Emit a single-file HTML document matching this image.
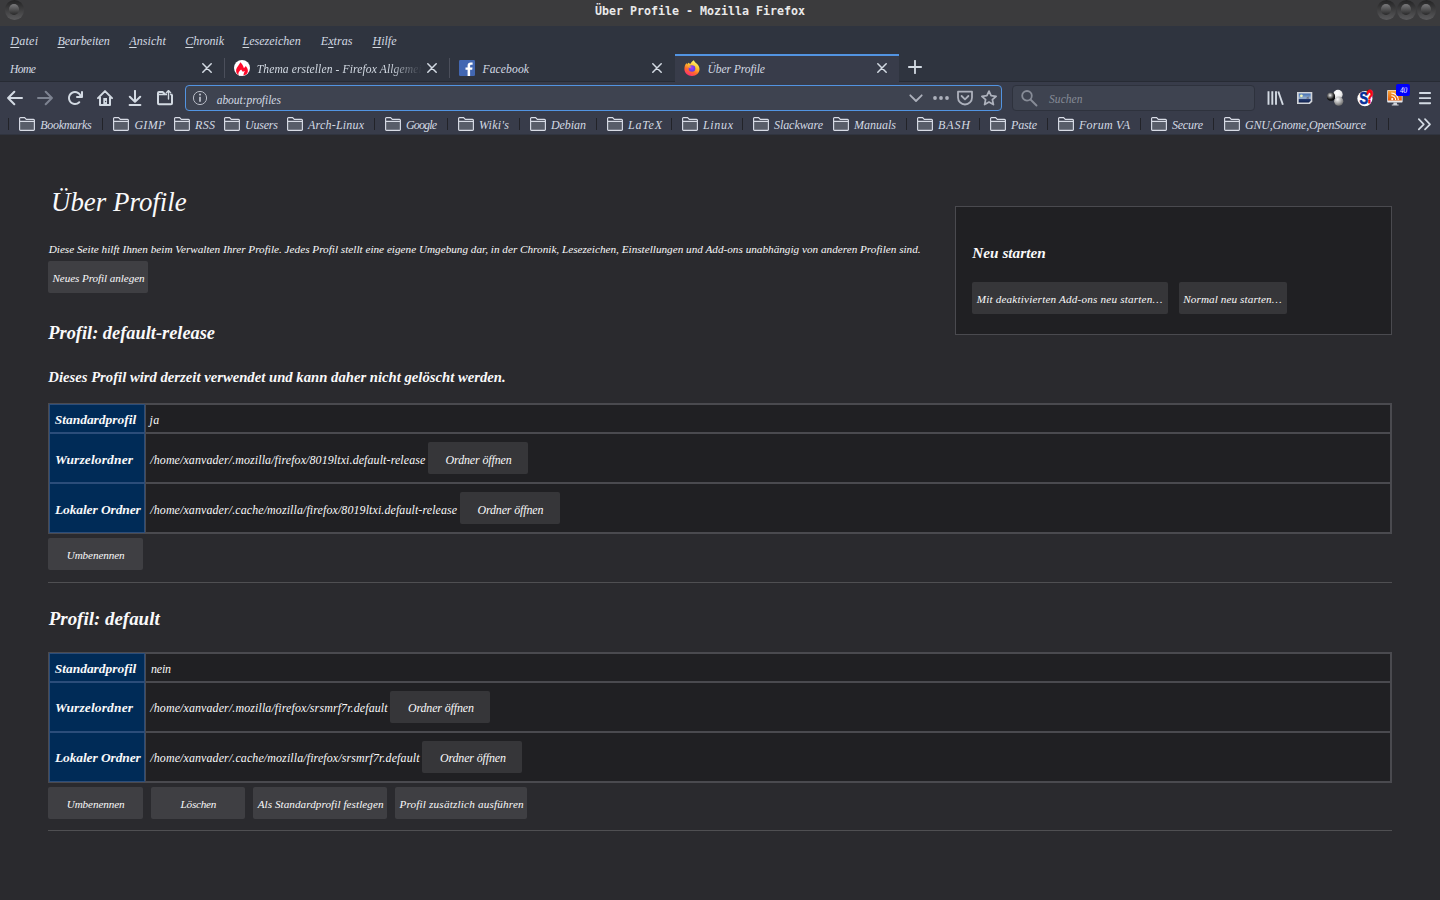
<!DOCTYPE html>
<html lang="de">
<head>
<meta charset="utf-8">
<title>Über Profile - Mozilla Firefox</title>
<style>
*{box-sizing:border-box;margin:0;padding:0}
html,body{width:1440px;height:900px;overflow:hidden;background:#2a2a2e}
body{position:relative;font-family:"Liberation Serif",serif;font-style:italic;color:#f9f9fa}
.a,.t,svg.i{position:absolute}
.t{white-space:nowrap;line-height:1;display:block}
.t u{text-decoration:underline;text-underline-offset:2px;text-decoration-thickness:1px}
#titlebar{left:0;top:0;width:1440px;height:26px;background:#3b3b3d}
#title{left:0;top:0;width:1400px;height:22px;line-height:22px;text-align:center;font-family:"DejaVu Sans Mono","Liberation Mono",monospace;font-style:normal;font-weight:bold;font-size:11.63px;color:#e9e9e9;white-space:nowrap}
.wb{top:0;width:19px;height:19.500px;border-radius:50%;background:linear-gradient(#232324,#5a5a5c)}
.wb::after{content:"";position:absolute;left:4.2px;top:4px;width:10.6px;height:10.8px;border-radius:50%;background:linear-gradient(#7a7a7c,#29292a)}
#chrome1{left:0;top:26px;width:1440px;height:56px;background:#2f343f}
#chrome2{left:0;top:82px;width:1440px;height:53px;background:#383c4a;border-bottom:1px solid #30343f}
#tabline{left:0;top:81px;width:1440px;height:1px;background:#272b34}
#acttab{left:675px;top:54px;width:224px;height:28px;background:#383c4a;border-top:2px solid #5294e2}
.sep{top:58px;width:1px;height:20px;background:#4b4f5b}
#urlbar{left:185px;top:85px;width:817px;height:26px;border:1px solid #5294e2;border-radius:4px;background:#3e4350}
#search{left:1012px;top:85px;width:243px;height:26px;border:1px solid #2e323d;border-radius:4px;background:#3e4350}
.bsep{top:118px;width:1px;height:12px;background:#222329}
.btn{background:#3f3f43;border-radius:2px;height:32px}
.btn.d{background:#363639}
.box{background:#202023;border:1px solid #4a4a4f}
.hr{left:48px;width:1344px;height:1px;background:#4f4f52}
.tbl{left:48px;width:1344px;height:131px;background:#202023;border:1px solid #4a4a4f}
.tbl i{position:absolute;display:block;left:96px;right:0;border:1px solid #4a4a4f}
.tbl b{position:absolute;display:block;background:#002b57;left:0;width:96px;border:1px solid #2b4d7a}
</style>
</head>
<body>
<div id="titlebar" class="a"></div>
<div id="title" class="a">Über Profile - Mozilla Firefox</div>
<div class="a wb" style="left:4.5px"></div>
<div class="a wb" style="left:1376.5px"></div>
<div class="a wb" style="left:1396.5px"></div>
<div class="a wb" style="left:1416.5px"></div>
<div id="chrome1" class="a"></div>
<div id="chrome2" class="a"></div>
<div id="tabline" class="a"></div>
<div id="acttab" class="a"></div>
<div class="a sep" style="left:224px"></div>
<div class="a sep" style="left:449px"></div>
<div id="urlbar" class="a"></div>
<div id="search" class="a"></div>
<!-- tab close buttons -->
<svg class="i" style="left:202px;top:63px" width="10" height="10" viewBox="0 0 10 10"><path d="M.8.8l8.4 8.4M9.200.8L.8 9.200" stroke="#d3dae3" stroke-width="1.500" stroke-linecap="round"/></svg>
<svg class="i" style="left:427px;top:63px" width="10" height="10" viewBox="0 0 10 10"><path d="M.8.8l8.4 8.4M9.200.8L.8 9.200" stroke="#d3dae3" stroke-width="1.500" stroke-linecap="round"/></svg>
<svg class="i" style="left:652px;top:63px" width="10" height="10" viewBox="0 0 10 10"><path d="M.8.8l8.4 8.4M9.200.8L.8 9.200" stroke="#d3dae3" stroke-width="1.500" stroke-linecap="round"/></svg>
<svg class="i" style="left:877px;top:63px" width="10" height="10" viewBox="0 0 10 10"><path d="M.8.8l8.4 8.4M9.200.8L.8 9.200" stroke="#d3dae3" stroke-width="1.500" stroke-linecap="round"/></svg>
<!-- new tab plus -->
<svg class="i" style="left:908px;top:60px" width="14" height="14" viewBox="0 0 14 14"><path d="M7 .8v12.400M.8 7h12.400" stroke="#d3dae3" stroke-width="1.800" stroke-linecap="round"/></svg>
<!-- favicon: flame -->
<svg class="i" style="left:234px;top:60px" width="16" height="16" viewBox="0 0 16 16"><circle cx="8" cy="8" r="8" fill="#fff"/><path d="M6.200 2.200C7.400 3 8.300 4.100 8.700 5.300c.5.900.8 1.800 1.100 2.700.9-.4 1.500-1.100 1.900-2.100 1 1 2.100 2.800 2.200 4.800.1 2.300-1.500 4.100-4.100 4.500H5.300C3.300 14.600 2.100 12.700 2.100 10.400c0-1.400.6-2.400 1.300-3.500C4.300 5.500 5.500 4.200 6.200 2.200z" fill="#ff0a2a"/><path d="M7.100 9.400C6 10.300 4.700 11.800 4.400 13.200c-.1 1 .3 1.900 1 2.600h3.700c.5-.9.500-1.900.8-2.900l1-2c-.9.400-1.800.6-2.500.5-.4-.8-.8-1.400-1.300-2z" fill="#fff"/></svg>
<!-- favicon: facebook -->
<svg class="i" style="left:459px;top:60px" width="16" height="16" viewBox="0 0 16 16"><rect width="16" height="16" rx="1.200" fill="#4267b2"/><path d="M11.100 16V9.800h2.100l.3-2.400h-2.400V5.900c0-.7.2-1.200 1.200-1.200h1.300V2.500c-.2 0-1-.1-1.900-.1-1.900 0-3.100 1.100-3.100 3.200v1.800H6.500v2.400h2.100V16z" fill="#fff"/></svg>
<!-- favicon: firefox -->
<svg class="i" style="left:684px;top:60px" width="16" height="16" viewBox="0 0 16 16"><defs><linearGradient id="fx1" x1="0.750" y1="0.100" x2="0.300" y2="1"><stop offset="0" stop-color="#fff36b"/><stop offset=".35" stop-color="#ffbd2f"/><stop offset=".65" stop-color="#ff6a2a"/><stop offset="1" stop-color="#ff2a78"/></linearGradient><radialGradient id="fx2" cx=".45" cy=".4" r=".6"><stop offset="0" stop-color="#a33dff"/><stop offset="1" stop-color="#5a3de0"/></radialGradient></defs><path d="M9.900.2c.2 1 .8 1.800 1.700 2.500 2.300 1.700 3.900 3.600 3.900 6.300 0 4-3.300 7-7.500 7S.4 13 .4 9c0-2.400.8-4.400 2.100-5.900.1.600.3 1 .7 1.300.3-.9.900-1.400 1.700-1.600.2.600.7 1 1.400 1.300C7 2.600 8.100 1.100 9.900.2z" fill="url(#fx1)"/><circle cx="8" cy="8.500" r="3.300" fill="url(#fx2)"/><path d="M3.900 6.600c1.200-.7 2.700-.5 3.900.1-.9.200-1.500.8-1.600 1.500-.9-.5-1.700-1-2.300-1.600z" fill="#ffb02e"/></svg>
<!-- nav icons -->
<svg class="i" style="left:7px;top:90px" width="16" height="16" viewBox="0 0 16 16"><path d="M15 8H1.800M7.300 1.800L1.100 8l6.200 6.200" fill="none" stroke="#d3dae3" stroke-width="2" stroke-linecap="round" stroke-linejoin="round"/></svg>
<svg class="i" style="left:37px;top:90px" width="16" height="16" viewBox="0 0 16 16"><path d="M1 8h13.200M8.700 1.800L14.900 8l-6.200 6.200" fill="none" stroke="#7d8391" stroke-width="2" stroke-linecap="round" stroke-linejoin="round"/></svg>
<svg class="i" style="left:67px;top:90px" width="16" height="16" viewBox="0 0 16 16"><path d="M15 1a1 1 0 0 0-1 1v2.418A6.995 6.995 0 1 0 8 15a6.954 6.954 0 0 0 4.950-2.050 1 1 0 0 0-1.414-1.414A5.019 5.019 0 1 1 12.549 6H10a1 1 0 0 0 0 2h5a1 1 0 0 0 1-1V2a1 1 0 0 0-1-1z" fill="#d3dae3"/></svg>
<svg class="i" style="left:97px;top:90px" width="16" height="16" viewBox="0 0 16 16"><path d="M1 8.100L8 1.100l7 7M3 7.200V15h10V7.200" fill="none" stroke="#d3dae3" stroke-width="2" stroke-linecap="round" stroke-linejoin="round"/><rect x="6.300" y="8" width="3.700" height="6.500" fill="#d3dae3"/><circle cx="8.600" cy="11.500" r=".65" fill="#3a3e4c"/></svg>
<svg class="i" style="left:127px;top:90px" width="16" height="16" viewBox="0 0 16 16"><path d="M8 .9v10.800M2.800 6.700L8 11.900l5.200-5.200M2.600 15h10.800" fill="none" stroke="#d3dae3" stroke-width="2" stroke-linecap="round" stroke-linejoin="round"/></svg>
<svg class="i" style="left:157px;top:90px" width="16" height="16" viewBox="0 0 16 16"><path d="M15 4.700V13.200a1 1 0 0 1-1 1H2a1 1 0 0 1-1-1V3a1 1 0 0 1 1-1h3.600L8.200 4.500" fill="none" stroke="#d3dae3" stroke-width="2" stroke-linejoin="round"/><path d="M1.500 4.600H10M13.100 4.450H15.500" fill="none" stroke="#d3dae3" stroke-width="1.500"/><path d="M11.500 9.100V.8M9.400 2.700L11.500.6l2.100 2.100" fill="none" stroke="#d3dae3" stroke-width="1.400" stroke-linecap="round" stroke-linejoin="round"/></svg>
<!-- urlbar icons -->
<svg class="i" style="left:192px;top:90px" width="16" height="16" viewBox="0 0 16 16"><circle cx="8" cy="8" r="6.600" fill="none" stroke="#b9bdc7" stroke-width="1"/><rect x="7.100" y="6.700" width="1.800" height="5" rx=".3" fill="#b9bdc7"/><circle cx="8" cy="4.600" r="1.100" fill="#b9bdc7"/></svg>
<svg class="i" style="left:908px;top:90px" width="16" height="16" viewBox="0 0 16 16"><path d="M2.300 5.300L8 11l5.700-5.700" fill="none" stroke="#adb1bc" stroke-width="1.800" stroke-linecap="round" stroke-linejoin="round"/></svg>
<svg class="i" style="left:933px;top:90px" width="16" height="16" viewBox="0 0 16 16"><circle cx="2" cy="8" r="1.900" fill="#adb1bc"/><circle cx="8" cy="8" r="1.900" fill="#adb1bc"/><circle cx="14" cy="8" r="1.900" fill="#adb1bc"/></svg>
<svg class="i" style="left:957px;top:90px" width="16" height="16" viewBox="0 0 16 16"><path d="M1 1.700h14v5.800a7 7 0 0 1-14 0z" fill="none" stroke="#adb1bc" stroke-width="1.800" stroke-linejoin="round"/><path d="M4.600 6L8 9.300 11.400 6" fill="none" stroke="#adb1bc" stroke-width="1.800" stroke-linecap="round" stroke-linejoin="round"/></svg>
<svg class="i" style="left:981px;top:90px" width="16" height="16" viewBox="0 0 16 16"><path d="M8 1.100l2.100 4.600 5 .6-3.700 3.400 1 4.900L8 12.100l-4.400 2.500 1-4.900L.9 6.300l5-.6z" fill="none" stroke="#adb1bc" stroke-width="1.750" stroke-linejoin="round"/></svg>
<svg class="i" style="left:1020.200px;top:89.300px" width="18" height="18" viewBox="0 0 18 18"><circle cx="7" cy="6.800" r="4.800" fill="none" stroke="#878c97" stroke-width="1.800"/><path d="M10.500 10.500l6 6" stroke="#878c97" stroke-width="1.900" stroke-linecap="round"/></svg>
<!-- toolbar right icons -->
<svg class="i" style="left:1267px;top:90px" width="17" height="16" viewBox="0 0 17 16"><path d="M1.500 1.200v13.600M5.300 1.200v13.600M9 1.200v13.600" stroke="#d3dae3" stroke-width="1.900"/><path d="M11.300 1.500l4.600 13.200" stroke="#d3dae3" stroke-width="1.900"/></svg>
<svg class="i" style="left:1297px;top:91.700px" width="16" height="12.500" viewBox="0 0 16 12.500"><defs><linearGradient id="im1" x1="0" y1="0" x2="0" y2="1"><stop offset="0" stop-color="#3f6cb0"/><stop offset=".55" stop-color="#9db6d2"/><stop offset=".6" stop-color="#27407a"/><stop offset="1" stop-color="#0f1f48"/></linearGradient></defs><path d="M0 0h15.300v9.700L12.700 12.100H0z" fill="#d0d3d8"/><path d="M1.700 1.500h12v7.300l-1.800 1.700H1.700z" fill="url(#im1)"/><circle cx="4.400" cy="3.800" r="1.400" fill="#f1f7b8"/><path d="M9.300 6.700l.7-2 .8.500.5-1.300.8 2.800z" fill="#6f7686"/></svg>
<svg class="i" style="left:1326px;top:89px" width="18" height="18" viewBox="0 0 18 18"><defs><radialGradient id="b1" cx=".4" cy=".33" r=".7"><stop offset="0" stop-color="#f4f4f4"/><stop offset=".3" stop-color="#8c8c8c"/><stop offset=".7" stop-color="#1c1c1c"/><stop offset="1" stop-color="#000"/></radialGradient><radialGradient id="b2" cx=".4" cy=".35" r=".75"><stop offset="0" stop-color="#fff"/><stop offset=".6" stop-color="#ececec"/><stop offset="1" stop-color="#b8b8b8"/></radialGradient><radialGradient id="b3" cx=".38" cy=".3" r=".75"><stop offset="0" stop-color="#fafafa"/><stop offset=".45" stop-color="#b9b9b9"/><stop offset="1" stop-color="#626262"/></radialGradient></defs><circle cx="12" cy="5.500" r="4.700" fill="url(#b2)"/><circle cx="5" cy="7.700" r="4.100" fill="url(#b1)"/><circle cx="12.700" cy="12.200" r="4.600" fill="url(#b3)"/></svg>
<svg class="i" style="left:1356px;top:88px" width="20" height="20" viewBox="0 0 20 20"><circle cx="8.900" cy="10.600" r="7.550" fill="#fff"/><text x="3.600" y="15.700" font-family="Liberation Sans,sans-serif" font-style="normal" font-weight="bold" font-size="15.800" fill="#06309a" stroke="#06309a" stroke-width=".7" textLength="8.600" lengthAdjust="spacingAndGlyphs">S</text><text x="10.300" y="14.700" font-family="Liberation Sans,sans-serif" font-style="normal" font-weight="bold" font-size="17.600" fill="#fb0410" stroke="#fb0410" stroke-width=".9" textLength="6.800" lengthAdjust="spacingAndGlyphs">?</text></svg>
<svg class="i" style="left:1387px;top:84px" width="24" height="22" viewBox="0 0 24 22"><defs><linearGradient id="rs1" x1="0" y1="0" x2="0" y2="1"><stop offset="0" stop-color="#f9a63c"/><stop offset="1" stop-color="#e25a04"/></linearGradient></defs><rect x=".2" y="5.900" width="15.400" height="12.700" rx=".8" fill="#e6e8ec"/><rect x="1" y="6.600" width="13.800" height="9.900" fill="url(#rs1)"/><path d="M6.600 18.600h3.200l.4 2h1.400v.9H4.800v-.9h1.400z" fill="#cfd2d8"/><circle cx="5.200" cy="15.100" r="1.050" fill="#fff"/><path d="M4.300 11.700a4.300 4.300 0 0 1 4.300 4.300M4.300 9a7 7 0 0 1 7 7" fill="none" stroke="#fff" stroke-width="1.150"/><rect x="9" y="0" width="13.900" height="12" rx="2" fill="#0000fa"/><text x="12.900" y="9.200" font-family="Liberation Serif,serif" font-style="italic" font-size="9" fill="#f3e6ff" textLength="7.400" lengthAdjust="spacingAndGlyphs">40</text></svg>
<svg class="i" style="left:1419px;top:90px" width="12" height="16" viewBox="0 0 12 16"><path d="M.8 3h10.400M.8 8.100h10.400M.8 13.200h10.400" stroke="#d3dae3" stroke-width="1.900" stroke-linecap="round"/></svg>
<svg class="i" style="left:1416px;top:117px" width="16" height="14" viewBox="0 0 16 14"><path d="M2.800 2.200L7.800 7.300 2.800 12.400M9 2.200l5 5.100-5 5.100" fill="none" stroke="#d3dae3" stroke-width="1.700" stroke-linecap="round" stroke-linejoin="round"/></svg>
<svg class="i" style="left:19px;top:117px" width="16" height="14" viewBox="0 0 16 14"><path d="M.6 4.300h14.800v8.200a.9.900 0 0 1-.9.900h-13a.9.900 0 0 1-.9-.9z" fill="#585d69"/><path d="M.6 1.500a.9.900 0 0 1 .9-.9h4.100l1.700 1.800h7.200a.9.900 0 0 1 .9.900v9.200a.9.900 0 0 1-.9.900h-13a.9.900 0 0 1-.9-.9zM.6 4.300h14.800" fill="none" stroke="#d8dce6" stroke-width="1.150"/></svg>
<svg class="i" style="left:113px;top:117px" width="16" height="14" viewBox="0 0 16 14"><path d="M.6 4.300h14.800v8.200a.9.900 0 0 1-.9.900h-13a.9.900 0 0 1-.9-.9z" fill="#585d69"/><path d="M.6 1.500a.9.900 0 0 1 .9-.9h4.100l1.700 1.800h7.200a.9.900 0 0 1 .9.900v9.200a.9.900 0 0 1-.9.900h-13a.9.900 0 0 1-.9-.9zM.6 4.300h14.800" fill="none" stroke="#d8dce6" stroke-width="1.150"/></svg>
<svg class="i" style="left:174px;top:117px" width="16" height="14" viewBox="0 0 16 14"><path d="M.6 4.300h14.800v8.200a.9.900 0 0 1-.9.900h-13a.9.900 0 0 1-.9-.9z" fill="#585d69"/><path d="M.6 1.500a.9.900 0 0 1 .9-.9h4.100l1.700 1.800h7.200a.9.900 0 0 1 .9.900v9.200a.9.900 0 0 1-.9.900h-13a.9.900 0 0 1-.9-.9zM.6 4.300h14.800" fill="none" stroke="#d8dce6" stroke-width="1.150"/></svg>
<svg class="i" style="left:224px;top:117px" width="16" height="14" viewBox="0 0 16 14"><path d="M.6 4.300h14.800v8.200a.9.900 0 0 1-.9.900h-13a.9.900 0 0 1-.9-.9z" fill="#585d69"/><path d="M.6 1.500a.9.900 0 0 1 .9-.9h4.100l1.700 1.800h7.200a.9.900 0 0 1 .9.900v9.200a.9.900 0 0 1-.9.900h-13a.9.900 0 0 1-.9-.9zM.6 4.300h14.800" fill="none" stroke="#d8dce6" stroke-width="1.150"/></svg>
<svg class="i" style="left:287px;top:117px" width="16" height="14" viewBox="0 0 16 14"><path d="M.6 4.300h14.800v8.200a.9.900 0 0 1-.9.900h-13a.9.900 0 0 1-.9-.9z" fill="#585d69"/><path d="M.6 1.500a.9.900 0 0 1 .9-.9h4.100l1.700 1.800h7.200a.9.900 0 0 1 .9.900v9.200a.9.900 0 0 1-.9.900h-13a.9.900 0 0 1-.9-.9zM.6 4.300h14.800" fill="none" stroke="#d8dce6" stroke-width="1.150"/></svg>
<svg class="i" style="left:385px;top:117px" width="16" height="14" viewBox="0 0 16 14"><path d="M.6 4.300h14.800v8.200a.9.900 0 0 1-.9.900h-13a.9.900 0 0 1-.9-.9z" fill="#585d69"/><path d="M.6 1.500a.9.900 0 0 1 .9-.9h4.100l1.700 1.800h7.200a.9.900 0 0 1 .9.900v9.200a.9.900 0 0 1-.9.900h-13a.9.900 0 0 1-.9-.9zM.6 4.300h14.800" fill="none" stroke="#d8dce6" stroke-width="1.150"/></svg>
<svg class="i" style="left:458px;top:117px" width="16" height="14" viewBox="0 0 16 14"><path d="M.6 4.300h14.800v8.200a.9.900 0 0 1-.9.900h-13a.9.900 0 0 1-.9-.9z" fill="#585d69"/><path d="M.6 1.500a.9.900 0 0 1 .9-.9h4.100l1.700 1.800h7.200a.9.900 0 0 1 .9.900v9.200a.9.900 0 0 1-.9.900h-13a.9.900 0 0 1-.9-.9zM.6 4.300h14.800" fill="none" stroke="#d8dce6" stroke-width="1.150"/></svg>
<svg class="i" style="left:530px;top:117px" width="16" height="14" viewBox="0 0 16 14"><path d="M.6 4.300h14.800v8.200a.9.900 0 0 1-.9.900h-13a.9.900 0 0 1-.9-.9z" fill="#585d69"/><path d="M.6 1.500a.9.900 0 0 1 .9-.9h4.100l1.700 1.800h7.200a.9.900 0 0 1 .9.900v9.200a.9.900 0 0 1-.9.900h-13a.9.900 0 0 1-.9-.9zM.6 4.300h14.800" fill="none" stroke="#d8dce6" stroke-width="1.150"/></svg>
<svg class="i" style="left:607px;top:117px" width="16" height="14" viewBox="0 0 16 14"><path d="M.6 4.300h14.800v8.200a.9.900 0 0 1-.9.900h-13a.9.900 0 0 1-.9-.9z" fill="#585d69"/><path d="M.6 1.500a.9.900 0 0 1 .9-.9h4.100l1.700 1.800h7.200a.9.900 0 0 1 .9.900v9.200a.9.900 0 0 1-.9.900h-13a.9.900 0 0 1-.9-.9zM.6 4.300h14.800" fill="none" stroke="#d8dce6" stroke-width="1.150"/></svg>
<svg class="i" style="left:682px;top:117px" width="16" height="14" viewBox="0 0 16 14"><path d="M.6 4.300h14.800v8.200a.9.900 0 0 1-.9.900h-13a.9.900 0 0 1-.9-.9z" fill="#585d69"/><path d="M.6 1.500a.9.900 0 0 1 .9-.9h4.100l1.700 1.800h7.200a.9.900 0 0 1 .9.900v9.200a.9.900 0 0 1-.9.900h-13a.9.900 0 0 1-.9-.9zM.6 4.300h14.800" fill="none" stroke="#d8dce6" stroke-width="1.150"/></svg>
<svg class="i" style="left:753px;top:117px" width="16" height="14" viewBox="0 0 16 14"><path d="M.6 4.300h14.800v8.200a.9.900 0 0 1-.9.900h-13a.9.900 0 0 1-.9-.9z" fill="#585d69"/><path d="M.6 1.500a.9.900 0 0 1 .9-.9h4.100l1.700 1.800h7.200a.9.900 0 0 1 .9.900v9.200a.9.900 0 0 1-.9.900h-13a.9.900 0 0 1-.9-.9zM.6 4.300h14.800" fill="none" stroke="#d8dce6" stroke-width="1.150"/></svg>
<svg class="i" style="left:833px;top:117px" width="16" height="14" viewBox="0 0 16 14"><path d="M.6 4.300h14.800v8.200a.9.900 0 0 1-.9.900h-13a.9.900 0 0 1-.9-.9z" fill="#585d69"/><path d="M.6 1.500a.9.900 0 0 1 .9-.9h4.100l1.700 1.800h7.200a.9.900 0 0 1 .9.900v9.200a.9.900 0 0 1-.9.900h-13a.9.900 0 0 1-.9-.9zM.6 4.300h14.800" fill="none" stroke="#d8dce6" stroke-width="1.150"/></svg>
<svg class="i" style="left:917px;top:117px" width="16" height="14" viewBox="0 0 16 14"><path d="M.6 4.300h14.800v8.200a.9.900 0 0 1-.9.900h-13a.9.900 0 0 1-.9-.9z" fill="#585d69"/><path d="M.6 1.500a.9.900 0 0 1 .9-.9h4.100l1.700 1.800h7.200a.9.900 0 0 1 .9.900v9.200a.9.900 0 0 1-.9.900h-13a.9.900 0 0 1-.9-.9zM.6 4.300h14.800" fill="none" stroke="#d8dce6" stroke-width="1.150"/></svg>
<svg class="i" style="left:990px;top:117px" width="16" height="14" viewBox="0 0 16 14"><path d="M.6 4.300h14.800v8.200a.9.900 0 0 1-.9.900h-13a.9.900 0 0 1-.9-.9z" fill="#585d69"/><path d="M.6 1.500a.9.900 0 0 1 .9-.9h4.100l1.700 1.800h7.200a.9.900 0 0 1 .9.900v9.200a.9.900 0 0 1-.9.900h-13a.9.900 0 0 1-.9-.9zM.6 4.300h14.800" fill="none" stroke="#d8dce6" stroke-width="1.150"/></svg>
<svg class="i" style="left:1058px;top:117px" width="16" height="14" viewBox="0 0 16 14"><path d="M.6 4.300h14.800v8.200a.9.900 0 0 1-.9.900h-13a.9.900 0 0 1-.9-.9z" fill="#585d69"/><path d="M.6 1.500a.9.900 0 0 1 .9-.9h4.100l1.700 1.800h7.200a.9.900 0 0 1 .9.900v9.200a.9.900 0 0 1-.9.900h-13a.9.900 0 0 1-.9-.9zM.6 4.300h14.800" fill="none" stroke="#d8dce6" stroke-width="1.150"/></svg>
<svg class="i" style="left:1151px;top:117px" width="16" height="14" viewBox="0 0 16 14"><path d="M.6 4.300h14.800v8.200a.9.900 0 0 1-.9.900h-13a.9.900 0 0 1-.9-.9z" fill="#585d69"/><path d="M.6 1.500a.9.900 0 0 1 .9-.9h4.100l1.700 1.800h7.200a.9.900 0 0 1 .9.900v9.200a.9.900 0 0 1-.9.900h-13a.9.900 0 0 1-.9-.9zM.6 4.300h14.800" fill="none" stroke="#d8dce6" stroke-width="1.150"/></svg>
<svg class="i" style="left:1224px;top:117px" width="16" height="14" viewBox="0 0 16 14"><path d="M.6 4.300h14.800v8.200a.9.900 0 0 1-.9.900h-13a.9.900 0 0 1-.9-.9z" fill="#585d69"/><path d="M.6 1.500a.9.900 0 0 1 .9-.9h4.100l1.700 1.800h7.200a.9.900 0 0 1 .9.900v9.200a.9.900 0 0 1-.9.900h-13a.9.900 0 0 1-.9-.9zM.6 4.300h14.800" fill="none" stroke="#d8dce6" stroke-width="1.150"/></svg>
<div class="a bsep" style="left:8px"></div>
<div class="a bsep" style="left:102px"></div>
<div class="a bsep" style="left:374px"></div>
<div class="a bsep" style="left:447px"></div>
<div class="a bsep" style="left:519px"></div>
<div class="a bsep" style="left:596px"></div>
<div class="a bsep" style="left:671px"></div>
<div class="a bsep" style="left:742px"></div>
<div class="a bsep" style="left:906px"></div>
<div class="a bsep" style="left:979px"></div>
<div class="a bsep" style="left:1047px"></div>
<div class="a bsep" style="left:1140px"></div>
<div class="a bsep" style="left:1213px"></div>
<div class="a bsep" style="left:1376px"></div>
<div class="a bsep" style="left:1388px"></div>

<div class="a btn" style="left:48px;top:261px;width:100px"></div>
<div class="a box" style="left:955px;top:206px;width:437px;height:129px"></div>
<div class="a btn d" style="left:972px;top:282px;width:196px"></div>
<div class="a btn d" style="left:1179px;top:282px;width:108px"></div>
<div class="a tbl" style="top:403px"><b style="top:0;height:29px"></b><b style="top:29px;height:50px"></b><b style="top:79px;height:50px"></b><i style="top:0;height:29px"></i><i style="top:29px;height:50px"></i><i style="top:79px;height:50px"></i></div>
<div class="a btn d" style="left:428px;top:442px;width:100px"></div>
<div class="a btn d" style="left:460px;top:492px;width:100px"></div>
<div class="a btn" style="left:48px;top:538px;width:95px"></div>
<div class="a hr" style="top:582px"></div>
<div class="a tbl" style="top:652px"><b style="top:0;height:29px"></b><b style="top:29px;height:50px"></b><b style="top:79px;height:50px"></b><i style="top:0;height:29px"></i><i style="top:29px;height:50px"></i><i style="top:79px;height:50px"></i></div>
<div class="a btn d" style="left:390px;top:691px;width:100px"></div>
<div class="a btn d" style="left:422px;top:741px;width:100px"></div>
<div class="a btn" style="left:48px;top:787px;width:95px"></div>
<div class="a btn" style="left:151px;top:787px;width:94px"></div>
<div class="a btn" style="left:253px;top:787px;width:134px"></div>
<div class="a btn" style="left:395px;top:787px;width:132px"></div>
<div class="a hr" style="top:830px"></div>
<!--CONTENT-->
<span class="t" style="left:10.3px;top:35.00px;font-size:12.05px;letter-spacing:0.23px;color:#d3dae3"><u>D</u>atei</span>
<span class="t" style="left:57.5px;top:35.00px;font-size:12.05px;letter-spacing:-0.07px;color:#d3dae3"><u>B</u>earbeiten</span>
<span class="t" style="left:129.2px;top:35.00px;font-size:12.05px;letter-spacing:0.08px;color:#d3dae3"><u>A</u>nsicht</span>
<span class="t" style="left:185.3px;top:35.00px;font-size:12.05px;letter-spacing:-0.06px;color:#d3dae3"><u>C</u>hronik</span>
<span class="t" style="left:242.5px;top:35.00px;font-size:12.05px;color:#d3dae3"><u>L</u>esezeichen</span>
<span class="t" style="left:320.7px;top:35.00px;font-size:12.05px;letter-spacing:0.07px;color:#d3dae3">E<u>x</u>tras</span>
<span class="t" style="left:372.5px;top:35.00px;font-size:12.05px;letter-spacing:-0.02px;color:#d3dae3"><u>H</u>ilfe</span>
<span class="t" style="left:10.0px;top:64.00px;font-size:11.60px;letter-spacing:-0.63px;color:#d3dae3">Home</span>
<span class="t" style="left:256.7px;top:64.00px;font-size:11.60px;letter-spacing:0.10px;color:#d3dae3;width:165.0px;padding-bottom:4px;overflow:hidden;-webkit-mask-image:linear-gradient(90deg,#000 80%,transparent);mask-image:linear-gradient(90deg,#000 80%,transparent)">Thema erstellen - Firefox Allgemei</span>
<span class="t" style="left:482.5px;top:64.00px;font-size:11.60px;letter-spacing:0.11px;color:#d3dae3">Facebook</span>
<span class="t" style="left:707.5px;top:64.00px;font-size:11.60px;letter-spacing:-0.09px;color:#d3dae3">Über Profile</span>
<span class="t" style="left:216.7px;top:95.00px;font-size:11.53px;letter-spacing:-0.05px;color:#d3dae3">about:profiles</span>
<span class="t" style="left:1049.0px;top:94.00px;font-size:11.53px;letter-spacing:0.06px;color:#868b96">Suchen</span>
<span class="t" style="left:40.3px;top:119.00px;font-size:12.00px;letter-spacing:-0.32px;color:#d3dae3">Bookmarks</span>
<span class="t" style="left:134.4px;top:119.00px;font-size:12.00px;letter-spacing:0.30px;color:#d3dae3">GIMP</span>
<span class="t" style="left:195.0px;top:119.00px;font-size:12.00px;letter-spacing:0.33px;color:#d3dae3">RSS</span>
<span class="t" style="left:245.0px;top:119.00px;font-size:12.00px;letter-spacing:-0.20px;color:#d3dae3">Uusers</span>
<span class="t" style="left:308.0px;top:119.00px;font-size:12.00px;letter-spacing:0.20px;color:#d3dae3">Arch-Linux</span>
<span class="t" style="left:406.0px;top:119.00px;font-size:12.00px;letter-spacing:-0.87px;color:#d3dae3">Google</span>
<span class="t" style="left:479.0px;top:119.00px;font-size:12.00px;letter-spacing:0.29px;color:#d3dae3">Wiki&#x27;s</span>
<span class="t" style="left:551.0px;top:119.00px;font-size:12.00px;letter-spacing:-0.07px;color:#d3dae3">Debian</span>
<span class="t" style="left:628.0px;top:119.00px;font-size:12.00px;letter-spacing:0.77px;color:#d3dae3">LaTeX</span>
<span class="t" style="left:703.0px;top:119.00px;font-size:12.00px;letter-spacing:0.67px;color:#d3dae3">Linux</span>
<span class="t" style="left:774.0px;top:119.00px;font-size:12.00px;letter-spacing:-0.07px;color:#d3dae3">Slackware</span>
<span class="t" style="left:854.0px;top:119.00px;font-size:12.00px;color:#d3dae3">Manuals</span>
<span class="t" style="left:938.0px;top:119.00px;font-size:12.00px;letter-spacing:0.89px;color:#d3dae3">BASH</span>
<span class="t" style="left:1011.0px;top:119.00px;font-size:12.00px;letter-spacing:-0.17px;color:#d3dae3">Paste</span>
<span class="t" style="left:1079.0px;top:119.00px;font-size:12.00px;letter-spacing:0.22px;color:#d3dae3">Forum VA</span>
<span class="t" style="left:1172.0px;top:119.00px;font-size:12.00px;letter-spacing:-0.24px;color:#d3dae3">Secure</span>
<span class="t" style="left:1245.0px;top:119.00px;font-size:12.00px;letter-spacing:-0.20px;color:#d3dae3">GNU,Gnome,OpenSource</span>
<span class="t" style="left:51.0px;top:189.00px;font-size:26.90px;color:#f9f9fa">Über Profile</span>
<span class="t" style="left:48.7px;top:244.00px;font-size:11.21px;color:#f9f9fa">Diese Seite hilft Ihnen beim Verwalten Ihrer Profile. Jedes Profil stellt eine eigene Umgebung dar, in der Chronik, Lesezeichen, Einstellungen und Add-ons unabhängig von anderen Profilen sind.</span>
<span class="t" style="left:52.5px;top:273.00px;font-size:11.15px;letter-spacing:-0.08px;color:#f9f9fa">Neues Profil anlegen</span>
<span class="t" style="left:48.3px;top:324.00px;font-size:18.36px;font-weight:bold;color:#f9f9fa">Profil: default-release</span>
<span class="t" style="left:48.3px;top:370.00px;font-size:14.69px;font-weight:bold;color:#f9f9fa">Dieses Profil wird derzeit verwendet und kann daher nicht gelöscht werden.</span>
<span class="t" style="left:48.7px;top:610.00px;font-size:18.94px;font-weight:bold;color:#f9f9fa">Profil: default</span>
<span class="t" style="left:972.3px;top:245.00px;font-size:15.27px;font-weight:bold;color:#f9f9fa">Neu starten</span>
<span class="t" style="left:976.7px;top:294.00px;font-size:11.15px;letter-spacing:0.19px;color:#f9f9fa">Mit deaktivierten Add-ons neu starten…</span>
<span class="t" style="left:1183.3px;top:294.00px;font-size:11.15px;letter-spacing:0.10px;color:#f9f9fa">Normal neu starten…</span>
<span class="t" style="left:54.7px;top:413.00px;font-size:13.47px;font-weight:bold;color:#f9f9fa">Standardprofil</span>
<span class="t" style="left:55.0px;top:453.00px;font-size:13.47px;letter-spacing:0.15px;font-weight:bold;color:#f9f9fa">Wurzelordner</span>
<span class="t" style="left:55.0px;top:503.00px;font-size:13.47px;letter-spacing:-0.11px;font-weight:bold;color:#f9f9fa">Lokaler Ordner</span>
<span class="t" style="left:149.5px;top:415.00px;font-size:11.94px;letter-spacing:0.41px;color:#f9f9fa">ja</span>
<span class="t" style="left:150.3px;top:455.00px;font-size:11.94px;letter-spacing:0.11px;color:#f9f9fa">/home/xanvader/.mozilla/firefox/8019ltxi.default-release</span>
<span class="t" style="left:150.3px;top:505.00px;font-size:11.94px;letter-spacing:0.11px;color:#f9f9fa">/home/xanvader/.cache/mozilla/firefox/8019ltxi.default-release</span>
<span class="t" style="left:445.6px;top:455.00px;font-size:11.94px;letter-spacing:-0.12px;color:#f9f9fa">Ordner öffnen</span>
<span class="t" style="left:477.4px;top:505.00px;font-size:11.94px;letter-spacing:-0.12px;color:#f9f9fa">Ordner öffnen</span>
<span class="t" style="left:54.7px;top:662.00px;font-size:13.47px;font-weight:bold;color:#f9f9fa">Standardprofil</span>
<span class="t" style="left:55.0px;top:701.00px;font-size:13.47px;letter-spacing:0.15px;font-weight:bold;color:#f9f9fa">Wurzelordner</span>
<span class="t" style="left:55.0px;top:751.00px;font-size:13.47px;letter-spacing:-0.11px;font-weight:bold;color:#f9f9fa">Lokaler Ordner</span>
<span class="t" style="left:151.0px;top:664.00px;font-size:11.94px;letter-spacing:-0.19px;color:#f9f9fa">nein</span>
<span class="t" style="left:150.3px;top:703.00px;font-size:11.94px;letter-spacing:0.12px;color:#f9f9fa">/home/xanvader/.mozilla/firefox/srsmrf7r.default</span>
<span class="t" style="left:150.3px;top:753.00px;font-size:11.94px;letter-spacing:0.12px;color:#f9f9fa">/home/xanvader/.cache/mozilla/firefox/srsmrf7r.default</span>
<span class="t" style="left:407.9px;top:703.00px;font-size:11.94px;letter-spacing:-0.12px;color:#f9f9fa">Ordner öffnen</span>
<span class="t" style="left:439.9px;top:753.00px;font-size:11.94px;letter-spacing:-0.12px;color:#f9f9fa">Ordner öffnen</span>
<span class="t" style="left:66.7px;top:550.00px;font-size:11.15px;letter-spacing:-0.09px;color:#f9f9fa">Umbenennen</span>
<span class="t" style="left:66.7px;top:799.00px;font-size:11.15px;letter-spacing:-0.09px;color:#f9f9fa">Umbenennen</span>
<span class="t" style="left:180.6px;top:799.00px;font-size:11.15px;letter-spacing:-0.23px;color:#f9f9fa">Löschen</span>
<span class="t" style="left:257.7px;top:799.00px;font-size:11.15px;letter-spacing:0.06px;color:#f9f9fa">Als Standardprofil festlegen</span>
<span class="t" style="left:399.4px;top:799.00px;font-size:11.15px;letter-spacing:0.19px;color:#f9f9fa">Profil zusätzlich ausführen</span>
</body>
</html>
